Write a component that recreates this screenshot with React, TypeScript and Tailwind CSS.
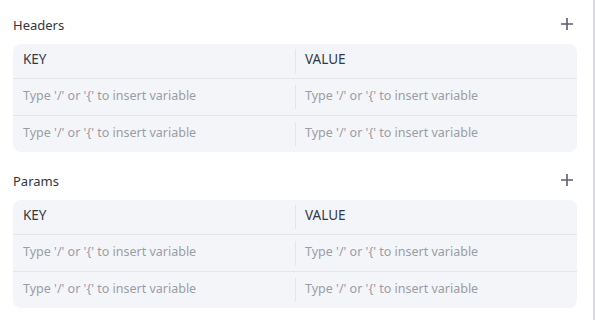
import React from "react";

const PH = "Type '/' or '{' to insert variable";

function Plus() {
  return (
    <svg width="14" height="14" viewBox="0 0 14 14" className="text-[#5b5f6b]">
      <path d="M7 1v12M1 7h12" stroke="currentColor" strokeWidth="1.6" fill="none" />
    </svg>
  );
}

function Row({ left, right, header }: { left: string; right: string; header?: boolean }) {
  const txt = header ? "text-[13.5px] text-[#353945] pb-[4px]" : "text-[12.5px] text-[#9a9da6] pb-[2px]";
  return (
    <div className={`grid grid-cols-2 ${header ? "h-[34px]" : "h-[36px]"}`}>
      <div className={`flex items-center pl-[10px] ${txt}`}>{left}</div>
      <div className="flex">
        <div className={`w-px bg-[#e4e5ea] ${header ? "my-[5px]" : "my-[6px]"}`} />
        <div className={`flex items-center pl-[9px] ${txt}`}>{right}</div>
      </div>
    </div>
  );
}

function Section({ title }: { title: string }) {
  return (
    <div className="flex flex-col">
      <div className="flex h-6 items-center justify-between">
        <span className="mt-[4px] text-[13px] text-[#333640]">{title}</span>
        <div className="mr-[3px] flex items-center">
          <Plus />
        </div>
      </div>
      <div className="mt-2 flex flex-col rounded-[8px] bg-[#f4f5f8]">
        <Row left="KEY" right="VALUE" header />
        <div className="h-px bg-[#e4e5ea]" />
        <Row left={PH} right={PH} />
        <div className="h-px bg-[#e4e5ea]" />
        <Row left={PH} right={PH} />
      </div>
    </div>
  );
}

export default function App() {
  return (
    <div className="flex h-[320px] w-[595px] bg-white font-['Noto_Sans',sans-serif]">
      <div className="flex flex-1 flex-col gap-4 pl-[13px] pr-[16px] pt-3">
        <Section title="Headers" />
        <Section title="Params" />
      </div>
      <div className="w-[2px] bg-[#dadbe0]" />
    </div>
  );
}
